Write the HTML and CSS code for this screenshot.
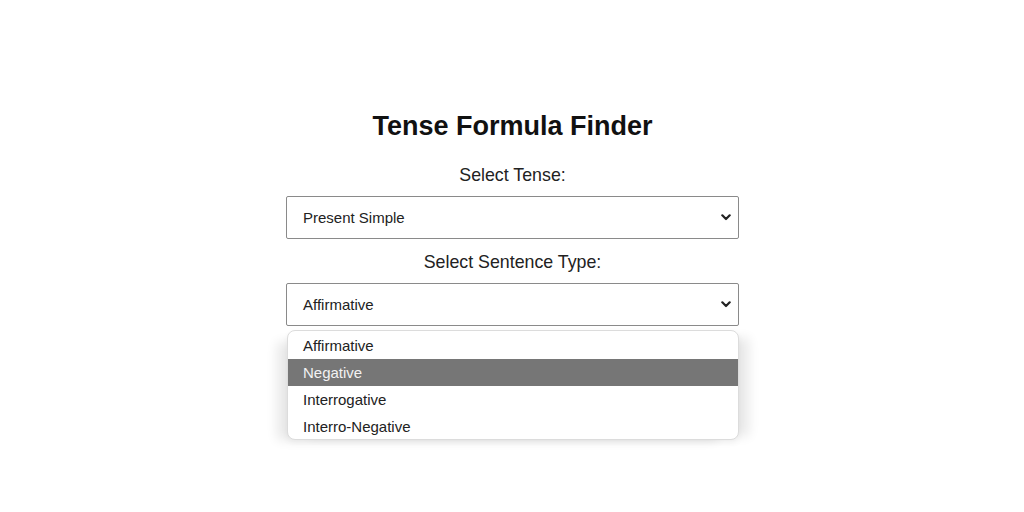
FILE: index.html
```html
<!DOCTYPE html>
<html lang="en">
<head>
    <meta charset="UTF-8">
    <title>Tense Formula Finder</title>
    <meta name="viewport" content="width=device-width, initial-scale=1.0">
    <link rel="stylesheet" href="styles.css">
</head>
<body>
    <div class="finder">
        <h1>Tense Formula Finder</h1>
        <label class="field-label">Select Tense:</label>
        <div class="select-box">
            <span>Present Simple</span>
            <svg class="chevron" viewBox="0 0 10 7" width="10" height="7"><path d="M1.3 1.3 L5 5 L8.7 1.3" fill="none" stroke="#222" stroke-width="2.2" stroke-linecap="round" stroke-linejoin="round"/></svg>
        </div>
        <label class="field-label">Select Sentence Type:</label>
        <div class="select-wrap">
            <div class="select-box">
                <span>Affirmative</span>
                <svg class="chevron" viewBox="0 0 10 7" width="10" height="7"><path d="M1.3 1.3 L5 5 L8.7 1.3" fill="none" stroke="#222" stroke-width="2.2" stroke-linecap="round" stroke-linejoin="round"/></svg>
            </div>
            <ul class="dropdown">
                <li>Affirmative</li>
                <li class="active">Negative</li>
                <li>Interrogative</li>
                <li>Interro-Negative</li>
            </ul>
        </div>
    </div>
</body>
</html>
```

FILE: styles.css
```css
html { box-sizing: border-box; }
*, *::before, *::after { box-sizing: inherit; }
body {
    margin: 0;
    min-height: 100vh;
    background: #fff;
    font-family: 'Liberation Sans', Arial, Helvetica, sans-serif;
    color: #222;
}
.finder {
    width: 453px;
    padding-top: 108px;
    margin-left: 286px;
}
h1 {
    margin: 0 0 21px;
    font-size: 27px;
    font-weight: bold;
    color: #111;
    text-align: center;
    line-height: 36px;
}
.field-label {
    display: block;
    text-align: center;
    font-size: 17.8px;
    line-height: 20px;
    color: #222;
    margin-bottom: 11px;
}
.select-box {
    height: 43px;
    border: 1px solid #8a8a8a;
    border-radius: 2px;
    background: #fff;
    display: flex;
    align-items: center;
    justify-content: space-between;
    padding: 0 7px 0 16px;
    font-size: 15px;
    color: #222;
    margin-bottom: 13px;
}
.chevron {
    display: block;
}
.select-wrap {
    position: relative;
}
.dropdown {
    position: absolute;
    top: 47px;
    left: 1px;
    right: 0;
    margin: 0;
    padding: 1px 0 0;
    list-style: none;
    background: #fff;
    border: 1px solid #dcdcdc;
    border-radius: 8px;
    box-shadow: 16px 2px 12px -6px rgba(0,0,0,0.09), -16px 6px 12px -6px rgba(0,0,0,0.09), 0 3px 6px rgba(0,0,0,0.05);
    overflow: hidden;
    font-size: 15px;
}
.dropdown li {
    height: 27px;
    line-height: 27px;
    padding-left: 15px;
    color: #222;
}
.dropdown li:last-child {
    height: 26px;
}
.dropdown li.active {
    background: #767676;
    color: #f2f2f2;
}
```
